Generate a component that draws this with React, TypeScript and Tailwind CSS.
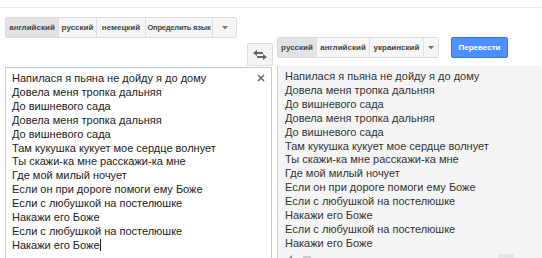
import { useState } from "react";

const source = [
  "Напилася я пьяна не дойду я до дому",
  "Довела меня тропка дальняя",
  "До вишневого сада",
  "Довела меня тропка дальняя",
  "До вишневого сада",
  "Там кукушка кукует мое сердце волнует",
  "Ты скажи-ка мне расскажи-ка мне",
  "Где мой милый ночует",
  "Если он при дороге помоги ему Боже",
  "Если с любушкой на постелюшке",
  "Накажи его Боже",
  "Если с любушкой на постелюшке",
  "Накажи его Боже",
];

type Lang = { name: string; w: string };

const LangBar = ({ langs, dropW }: { langs: Lang[]; dropW: string }) => (
  <div className="flex h-[21px] border border-[#dcdcdc] rounded-[2px] text-[8px] font-bold text-[#444]">
    {langs.map((l, i) => (
      <div
        key={l.name}
        className={`flex items-center justify-center border-r border-[#e0e0e0] whitespace-nowrap ${l.w} ${
          i === 0 ? "bg-[#e3e3e3]" : "bg-[#f6f6f6]"
        }`}
      >
        {l.name}
      </div>
    ))}
    <div className={`flex items-center justify-center bg-[#f6f6f6] ${dropW}`}>
      <svg width="6" height="4" viewBox="0 0 6 4">
        <path d="M0 0h6L3 3.5z" fill="#777" />
      </svg>
    </div>
  </div>
);

const App = () => {
  const [text] = useState(source.join("\n"));

  return (
    <div
      className="w-[542px] h-[258px] overflow-hidden bg-white relative"
      style={{ fontFamily: '"Liberation Sans", Arial, sans-serif' }}
    >
      <div className="h-[8px] border-b border-[#ebebeb]" />
      <div className="flex">
        {/* source column */}
        <div className="w-[267px] ml-[5px] flex flex-col">
          <div className="mt-[9px] flex">
            <LangBar
              langs={[
                { name: "английский", w: "w-[53px]" },
                { name: "русский", w: "w-[38px]" },
                { name: "немецкий", w: "w-[49px]" },
                { name: "Определить язык", w: "w-[67px] text-[7.5px] tracking-[-0.2px]" },
              ]}
              dropW="w-[23px]"
            />
          </div>
          <div className="flex justify-end mt-[5px]">
            <div className="w-[26px] h-[23px] border border-[#dcdcdc] rounded-[2px] bg-[#f5f5f5] flex items-center justify-center -mr-[1px]">
              <svg width="14" height="10" viewBox="0 0 14 10">
                <path d="M0 3l4-3v2h6v2H4v2z" fill="#666" />
                <path d="M14 7l-4 3V8H4V6h6V4z" fill="#666" />
              </svg>
            </div>
          </div>
          <div className="mt-[1px] h-[200px] border border-[#b9cdf0] relative">
            <div className="absolute right-[6px] top-[6px]">
              <svg width="8" height="8" viewBox="0 0 8 8">
                <path d="M1 1l6 6M7 1L1 7" stroke="#666" strokeWidth="1.6" />
              </svg>
            </div>
            <div className="pl-[6px] pt-[4px] text-[11px] leading-[13.9px] text-[#222] whitespace-pre">
              {text}
              <span className="inline-block w-px h-[12px] bg-[#222] align-[-2px]" />
            </div>
          </div>
        </div>

        {/* target column */}
        <div className="flex-1 ml-[5px] flex flex-col">
          <div className="mt-[29px] flex items-center">
            <LangBar
              langs={[
                { name: "русский", w: "w-[39px]" },
                { name: "английский", w: "w-[53px]" },
                { name: "украинский", w: "w-[54px]" },
              ]}
              dropW="w-[14px]"
            />
            <div className="ml-[12px] h-[21px] w-[57px] flex items-center justify-center bg-[#4d90fe] border border-[#3079ed] rounded-[2px] text-white text-[8px] font-bold">
              Перевести
            </div>
          </div>
          <div className="mt-[8px] h-[200px] bg-[#f5f5f5] border-l border-[#d0d0d0] pl-[7px] pt-[4px]">
            <div className="text-[11px] leading-[13.9px] text-[#333] whitespace-pre">
              {source.join("\n")}
            </div>
            <div className="flex items-center mt-[3px] h-[12px]">
              <svg width="10" height="10" viewBox="0 0 10 10" className="ml-[2px]">
                <path d="M0 3h2l3-3v10L2 7H0z" fill="#888" />
              </svg>
              <div className="ml-[6px] w-[8px] h-[8px] bg-[#ccc]" />
              <div className="ml-auto mr-[28px] w-[16px] h-[12px] bg-[#e6e6e6] rounded-[2px]" />
            </div>
          </div>
        </div>
      </div>
    </div>
  );
};

export default App;
